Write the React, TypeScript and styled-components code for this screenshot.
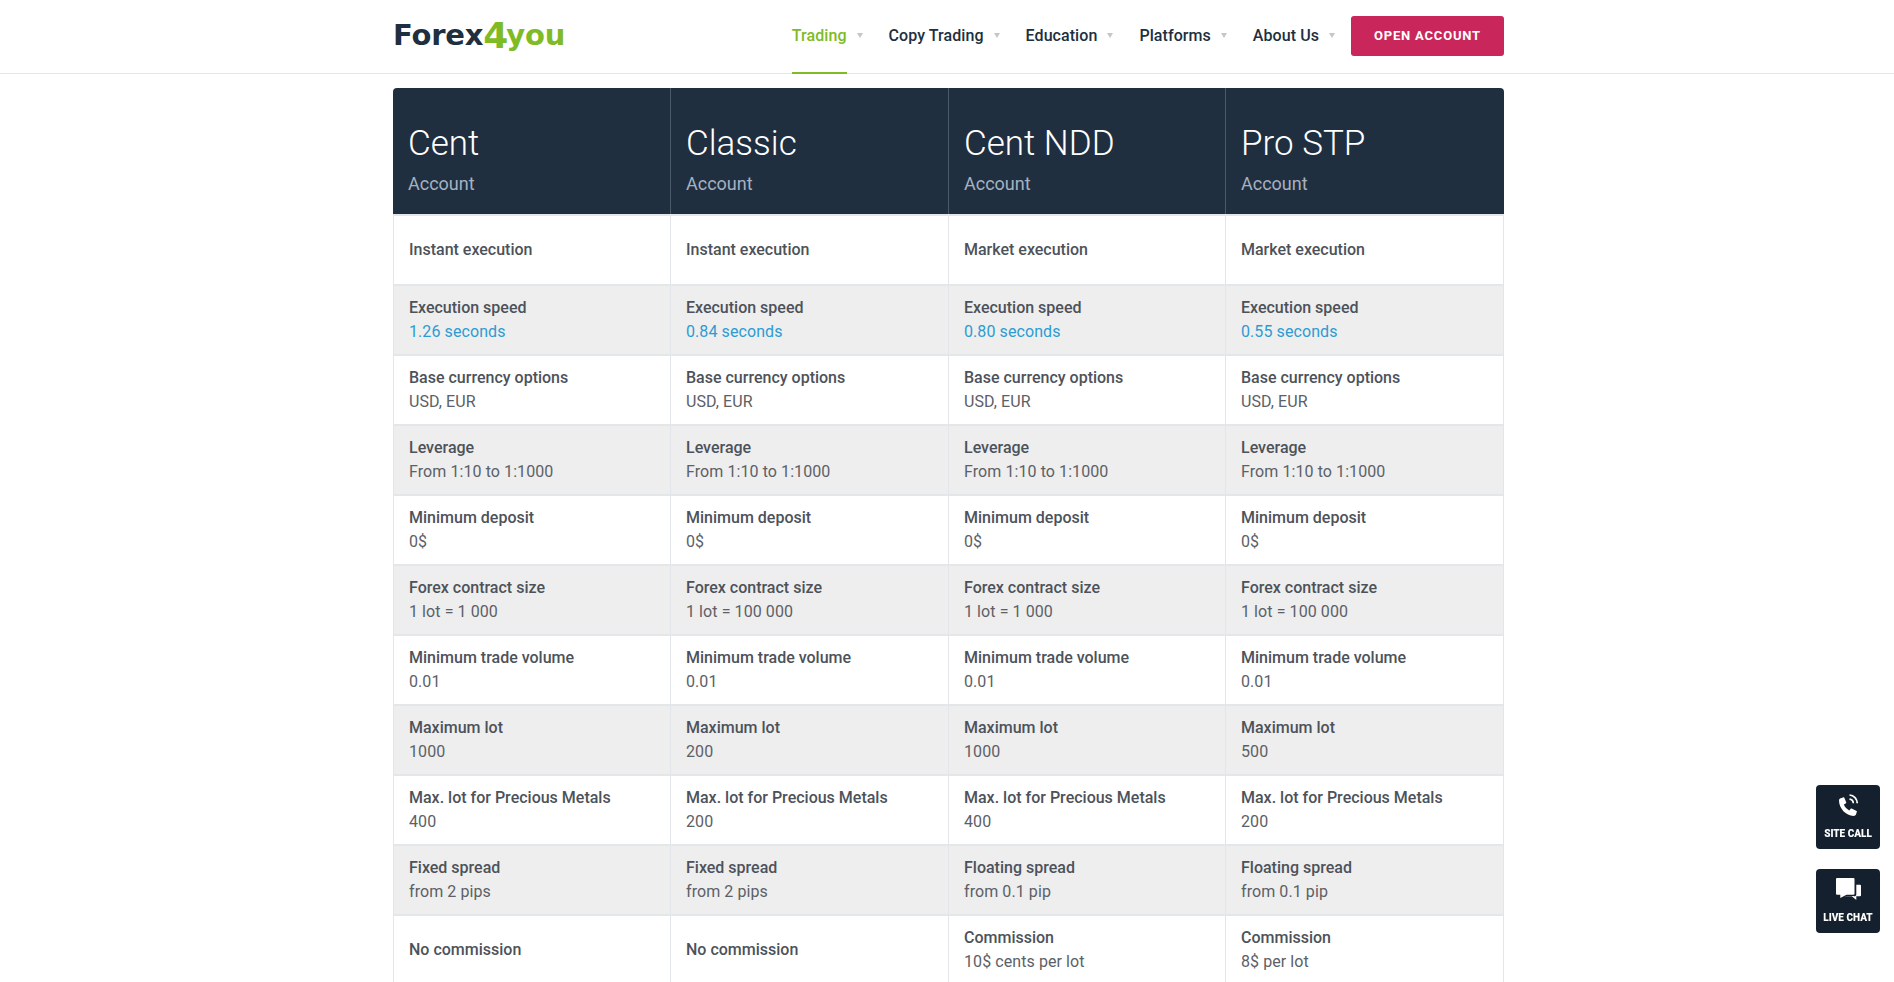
import React from 'react';
import styled, { createGlobalStyle } from 'styled-components';

const GlobalStyle = createGlobalStyle`
  html, body {
    margin: 0;
    height: 100%;
    overflow: hidden;
    background: #fff;
    font-family: Roboto, "Liberation Sans", sans-serif;
  }
`;

type Cell = { label: string; value?: string; speed?: boolean };

const accounts = ['Cent', 'Classic', 'Cent NDD', 'Pro STP'];

const rows: Cell[][] = [
  [{ label: 'Instant execution' }, { label: 'Instant execution' }, { label: 'Market execution' }, { label: 'Market execution' }],
  ['1.26', '0.84', '0.80', '0.55'].map((s) => ({ label: 'Execution speed', value: `${s} seconds`, speed: true })),
  [0, 1, 2, 3].map(() => ({ label: 'Base currency options', value: 'USD, EUR' })),
  [0, 1, 2, 3].map(() => ({ label: 'Leverage', value: 'From 1:10 to 1:1000' })),
  [0, 1, 2, 3].map(() => ({ label: 'Minimum deposit', value: '0$' })),
  ['1 000', '100 000', '1 000', '100 000'].map((s) => ({ label: 'Forex contract size', value: `1 lot = ${s}` })),
  [0, 1, 2, 3].map(() => ({ label: 'Minimum trade volume', value: '0.01' })),
  ['1000', '200', '1000', '500'].map((s) => ({ label: 'Maximum lot', value: s })),
  ['400', '200', '400', '200'].map((s) => ({ label: 'Max. lot for Precious Metals', value: s })),
  [
    { label: 'Fixed spread', value: 'from 2 pips' },
    { label: 'Fixed spread', value: 'from 2 pips' },
    { label: 'Floating spread', value: 'from 0.1 pip' },
    { label: 'Floating spread', value: 'from 0.1 pip' },
  ],
  [
    { label: 'No commission' },
    { label: 'No commission' },
    { label: 'Commission', value: '10$ cents per lot' },
    { label: 'Commission', value: '8$ per lot' },
  ],
];

const navItems = ['Trading', 'Copy Trading', 'Education', 'Platforms', 'About Us'];

function PhoneIcon() {
  return (
    <svg width="20" height="22" viewBox="0 0 20 22" fill="currentColor">
      <path d="M2 4.6L5.6 3.3Q6 3.2 6.2 3.6L8.3 8.6Q8.4 9 8 9.2L5.9 10.6C6.8 13.4 9 15.4 11.3 16.4L12.9 14.6Q13.2 14.3 13.6 14.5L18.6 17Q19 17.2 18.9 17.6L18 20.6Q17.5 22 15.5 22C8 21.8 1 14.5 1 6.5Q1 5 2 4.6Z" />
      <path d="M11.5 1A8.2 8.2 0 0 1 19.2 9.3" fill="none" stroke="currentColor" strokeWidth="1.7" />
      <path d="M11.5 5.2A4.2 4.2 0 0 1 15.3 9.3" fill="none" stroke="currentColor" strokeWidth="1.7" />
    </svg>
  );
}

function ChatIcon() {
  return (
    <svg width="25" height="22" viewBox="0 0 25 22" fill="currentColor">
      <path d="M1 0H17.5a1 1 0 0 1 1 1V15.7a1 1 0 0 1-1 1H10.5L4.3 20V16.7H1a1 1 0 0 1-1-1V1a1 1 0 0 1 1-1Z" />
      <path d="M20.3 6.7H24a1 1 0 0 1 1 1V17.3a1 1 0 0 1-1 1H20.3V22L15.8 18.3H8L11 18 11.3 18H17.5a1.8 1.8 0 0 0 2.8-1.8Z" />
    </svg>
  );
}

export default function App() {
  return (
    <>
      <GlobalStyle />
      <Header>
        <HeaderInner>
          <Logo>
            Forex<Four>4</Four>
            <You>you</You>
          </Logo>
          <Nav>
            {navItems.map((item, i) => (
              <NavItem key={item} $active={i === 0}>
                {item}
                <Caret />
              </NavItem>
            ))}
            <OpenAccount>OPEN ACCOUNT</OpenAccount>
          </Nav>
        </HeaderInner>
      </Header>
      <Main>
        <HeadRow>
          {accounts.map((name) => (
            <HeadCell key={name}>
              <AccountName>{name}</AccountName>
              <AccountSub>Account</AccountSub>
            </HeadCell>
          ))}
        </HeadRow>
        {rows.map((row, i) => (
          <Row key={i} $even={i % 2 === 1}>
            {row.map((cell, j) => (
              <BodyCell key={j}>
                <Label>{cell.label}</Label>
                {cell.value && <Value $speed={cell.speed}>{cell.value}</Value>}
              </BodyCell>
            ))}
          </Row>
        ))}
      </Main>
      <Side>
        <SideButton>
          <SideIcon>
            <PhoneIcon />
          </SideIcon>
          <SideLabel>SITE CALL</SideLabel>
        </SideButton>
        <SideButton>
          <SideIcon>
            <ChatIcon />
          </SideIcon>
          <SideLabel>LIVE CHAT</SideLabel>
        </SideButton>
      </Side>
    </>
  );
}

const Header = styled.header`
  height: 73px;
  border-bottom: 1px solid #e6e6e6;
`;

const HeaderInner = styled.div`
  width: 1111px;
  height: 100%;
  margin-left: 393px;
  display: flex;
  justify-content: space-between;
  align-items: center;
`;

const Logo = styled.div`
  font-family: "DejaVu Sans", sans-serif;
  font-size: 29px;
  font-weight: 700;
  letter-spacing: -0.2px;
  color: #202f3f;
  line-height: 1;
  margin-top: -3px;
`;

const Four = styled.span`
  color: #7fbb25;
  font-size: 36px;
  letter-spacing: -2px;
  vertical-align: -3px;
  line-height: 0;
`;

const You = styled.span`
  color: #7fbb25;
`;

const Nav = styled.nav`
  display: flex;
  align-items: center;
  height: 100%;
`;

const NavItem = styled.a<{ $active?: boolean }>`
  position: relative;
  display: flex;
  align-items: center;
  height: 100%;
  margin-right: 42px;
  padding-bottom: 3px;
  box-sizing: border-box;
  font-size: 16px;
  font-weight: 500;
  letter-spacing: 0.07px;
  color: ${(p) => (p.$active ? '#7fbb25' : '#202f3f')};
  &:last-of-type {
    margin-right: 32px;
  }
  ${(p) =>
    p.$active &&
    `&::after {
      content: '';
      position: absolute;
      left: 0;
      right: 0;
      bottom: -1px;
      height: 2px;
      background: #7fbb25;
    }`}
`;

const Caret = styled.i`
  position: absolute;
  right: -16px;
  top: 33px;
  width: 0;
  height: 0;
  border-left: 3.5px solid transparent;
  border-right: 3.5px solid transparent;
  border-top: 5px solid #c3c7cc;
`;

const OpenAccount = styled.button`
  width: 153px;
  height: 40px;
  margin-bottom: 2px;
  border: 0;
  border-radius: 3px;
  background: #c9275b;
  color: #fff;
  font-family: inherit;
  font-size: 13px;
  font-weight: 700;
  letter-spacing: 0.8px;
`;

const Main = styled.main`
  width: 1111px;
  margin: 14px 0 0 393px;
`;

const HeadRow = styled.div`
  display: grid;
  grid-template-columns: 277px 278px 277px 1fr;
  height: 126px;
  background: #202f3f;
  border-radius: 4px 4px 0 0;
`;

const HeadCell = styled.div`
  padding: 35px 0 0 15px;
  & + & {
    border-left: 1px solid #4c5969;
  }
`;

const AccountName = styled.div`
  font-size: 35px;
  font-weight: 300;
  line-height: 42px;
  color: #fff;
`;

const AccountSub = styled.div`
  margin-top: 8px;
  font-size: 18px;
  line-height: 22px;
  color: #a6b1c1;
`;

const Row = styled.div<{ $even?: boolean }>`
  display: grid;
  grid-template-columns: 276px 278px 277px 1fr;
  height: 70px;
  box-sizing: border-box;
  background: ${(p) => (p.$even ? '#eeeeee' : '#fff')};
  border-top: 2px solid #e4e7ea;
  border-left: 1px solid #e2e5e9;
  border-right: 1px solid #e2e5e9;
`;

const BodyCell = styled.div`
  display: flex;
  flex-direction: column;
  justify-content: center;
  padding-left: 15px;
  & + & {
    border-left: 1px solid #e2e5e9;
  }
`;

const Label = styled.div`
  font-size: 16px;
  font-weight: 500;
  line-height: 24px;
  color: #4d525a;
`;

const Value = styled.div<{ $speed?: boolean }>`
  font-size: 16px;
  line-height: 24px;
  letter-spacing: 0.08px;
  color: ${(p) => (p.$speed ? '#2d9bd2' : '#5c6067')};
`;

const Side = styled.aside`
  position: fixed;
  right: 14px;
  top: 785px;
  display: flex;
  flex-direction: column;
  gap: 20px;
`;

const SideButton = styled.div`
  width: 64px;
  height: 64px;
  box-sizing: border-box;
  padding-top: 5px;
  border-radius: 4px;
  background: #14202e;
  color: #fff;
  display: flex;
  flex-direction: column;
  align-items: center;
`;

const SideIcon = styled.div`
  height: 30px;
  display: flex;
  align-items: center;
  justify-content: center;
`;

const SideLabel = styled.span`
  margin-top: 8px;
  font-size: 10px;
  font-weight: 900;
  line-height: 12px;
`;
